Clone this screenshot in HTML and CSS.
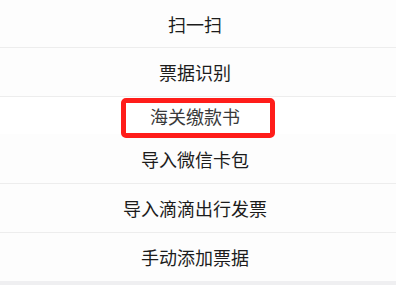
FILE: index.html
```html
<!DOCTYPE html>
<html lang="zh-CN">
<head>
<meta charset="utf-8">
<link rel="stylesheet" href="styles.css">
</head>
<body>
<div class="sheet">
  <div class="item item-first">扫一扫</div>
  <div class="item">票据识别</div>
  <div class="item item-short item-hl">海关缴款书</div>
  <div class="item item-tall">导入微信卡包</div>
  <div class="item">导入滴滴出行发票</div>
  <div class="item item-last">手动添加票据</div>
  <div class="mark"></div>
</div>
</body>
</html>
```
FILE: styles.css
```css
html, body {
  margin: 0;
  padding: 0;
  background: #efeff1;
}
.sheet {
  position: relative;
  width: 396px;
  height: 285px;
  display: flex;
  flex-direction: column;
  background: #efeff1;
  font-family: "Noto Sans CJK SC", "Noto Sans", sans-serif;
}
.item {
  height: 48px;
  flex: none;
  display: flex;
  align-items: center;
  justify-content: center;
  padding-right: 6px;
  font-size: 18px;
  color: #1c1c1c;
  background: #fdfdfd;
  border-bottom: 1px solid #ededed;
}
.item-first {
  height: 47px;
}
.item-short {
  height: 37px;
  border-bottom: none;
  background: #ffffff;
  color: #3a3a3a;
}
.item-tall {
  height: 49px;
}
.item-last {
  border-bottom: none;
}
.mark {
  position: absolute;
  left: 121px;
  top: 98px;
  width: 144px;
  height: 30px;
  border: 5px solid #ff1d1a;
  border-radius: 5px;
}
```
